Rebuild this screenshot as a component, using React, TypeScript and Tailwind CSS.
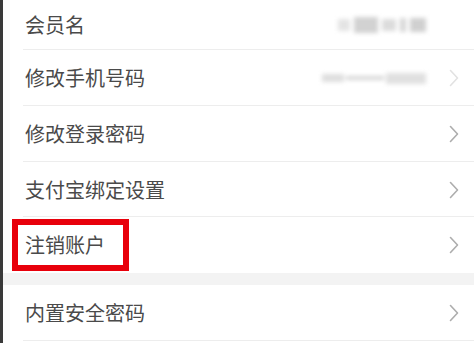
import React from "react";

const Chevron = ({ light }: { light?: boolean }) => (
  <svg width="12" height="18" viewBox="0 0 12 18" className="shrink-0">
    <path d="M2.5 1.5 L9.5 9 L2.5 16.5" fill="none" stroke={light ? "#e2e2e2" : "#adadad"} strokeWidth="1.6" strokeLinecap="round" strokeLinejoin="round" />
  </svg>
);

const Row = ({
  label,
  h,
  right,
  chevron = true,
  lightChevron,
  divider = true,
  boxed,
}: {
  label: string;
  h: string;
  right?: React.ReactNode;
  chevron?: boolean;
  lightChevron?: boolean;
  divider?: boolean;
  boxed?: boolean;
}) => (
  <div className={`relative flex items-center ${h} pl-[22px] pr-[14px]`}>
    <span className="text-[20px] leading-none text-[#4a4a4a]">{label}</span>
    <div className="flex-1" />
    {right}
    {chevron ? <div className="ml-[20px] w-[12px] flex justify-center"><Chevron light={lightChevron} /></div> : <div className="ml-[20px] w-[12px]" />}
    {divider && <div className="absolute left-[20px] right-0 bottom-0 h-px bg-[#ededed]" />}
    {boxed && <div className="absolute left-[9px] top-[2px] w-[117px] h-[52px] border-[6px] border-[#e8000b]" />}
  </div>
);

export default function App() {
  return (
    <div
      className="w-[474px] h-[343px] overflow-hidden bg-white flex"
      style={{ fontFamily: '"Noto Sans CJK SC", "Noto Sans", sans-serif' }}
    >
      <div className="w-[3px] bg-[#3a3a3a] shrink-0" />
      <div className="flex-1 flex flex-col -ml-[3px] pl-[3px]">
        <Row
          label="会员名"
          h="h-[50px]"
          chevron={false}
          right={
            <div className="flex items-center gap-[4px] blur-[2px] mr-[2px]">
              <div className="w-[12px] h-[12px] bg-[#e4e4e4]" />
              <div className="w-[24px] h-[16px] bg-[#d2d2d2]" />
              <div className="w-[14px] h-[12px] bg-[#dcdcdc]" />
              <div className="w-[6px] h-[14px] bg-[#d6d6d6]" />
              <div className="w-[16px] h-[14px] bg-[#d0d0d0]" />
            </div>
          }
        />
        <Row
          label="修改手机号码"
          h="h-[56px]"
          lightChevron
          right={
            <div className="flex items-center gap-[2px] blur-[2px] mr-[2px]">
              <div className="w-[22px] h-[8px] bg-[#dedede]" />
              <div className="w-[38px] h-[4px] bg-[#d6d6d6]" />
              <div className="w-[40px] h-[11px] bg-[#e0e0e0]" />
            </div>
          }
        />
        <Row label="修改登录密码" h="h-[56px]" />
        <Row label="支付宝绑定设置" h="h-[55px]" />
        <Row label="注销账户" h="h-[56px]" divider={false} boxed />
        <div className="h-[12px] bg-[#f3f3f3]" />
        <Row label="内置安全密码" h="h-[56px]" />
      </div>
    </div>
  );
}
